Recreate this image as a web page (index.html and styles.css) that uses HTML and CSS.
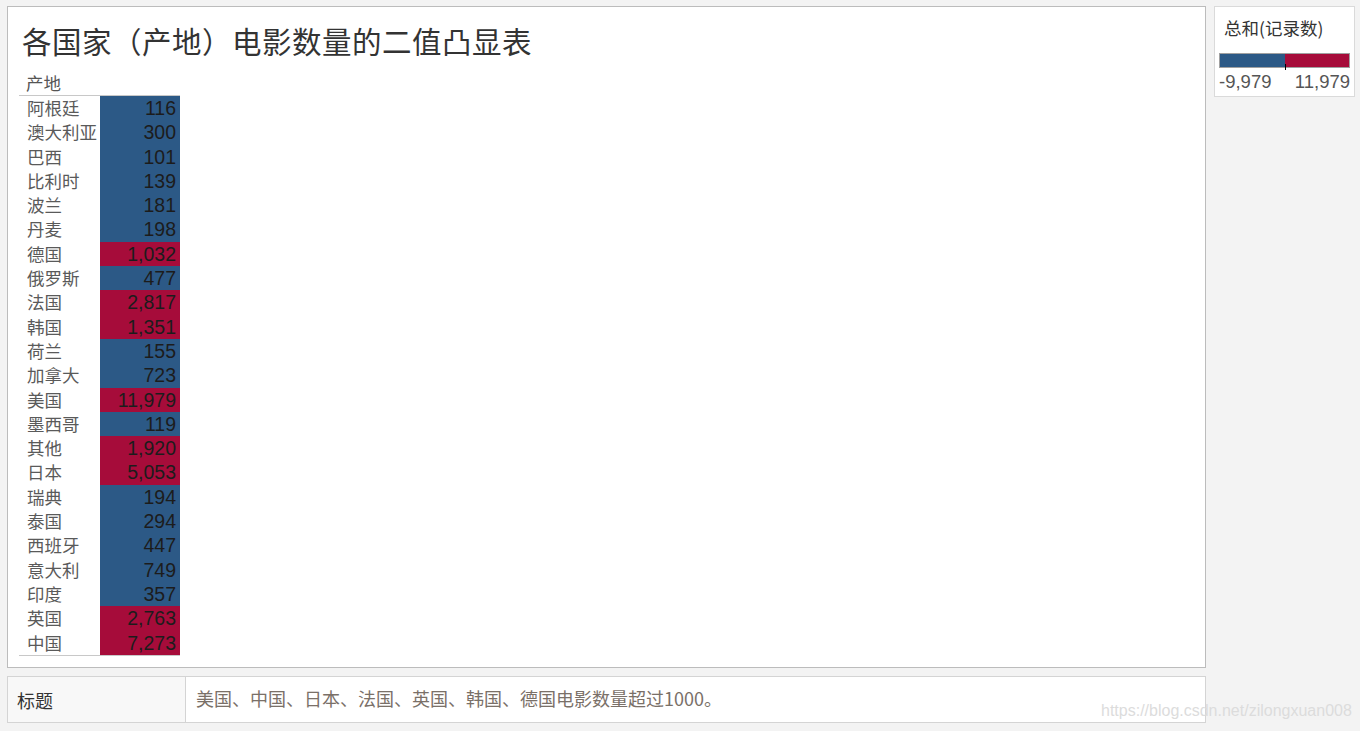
FILE: index.html
```html
<!DOCTYPE html>
<html lang="zh-CN">
<head>
<meta charset="utf-8">
<title>各国家（产地）电影数量的二值凸显表</title>
<link rel="stylesheet" href="styles.css">
</head>
<body>
<div class="page">
  <div class="left">
    <div class="main">
      <h1 class="title">各国家（产地）电影数量的二值凸显表</h1>
      <div class="table">
        <div class="head">产地</div>
        <div class="row"><span class="lab">阿根廷</span><span class="val blue">116</span></div>
        <div class="row"><span class="lab">澳大利亚</span><span class="val blue">300</span></div>
        <div class="row"><span class="lab">巴西</span><span class="val blue">101</span></div>
        <div class="row"><span class="lab">比利时</span><span class="val blue">139</span></div>
        <div class="row"><span class="lab">波兰</span><span class="val blue">181</span></div>
        <div class="row"><span class="lab">丹麦</span><span class="val blue">198</span></div>
        <div class="row"><span class="lab">德国</span><span class="val red">1,032</span></div>
        <div class="row"><span class="lab">俄罗斯</span><span class="val blue">477</span></div>
        <div class="row"><span class="lab">法国</span><span class="val red">2,817</span></div>
        <div class="row"><span class="lab">韩国</span><span class="val red">1,351</span></div>
        <div class="row"><span class="lab">荷兰</span><span class="val blue">155</span></div>
        <div class="row"><span class="lab">加拿大</span><span class="val blue">723</span></div>
        <div class="row"><span class="lab">美国</span><span class="val red">11,979</span></div>
        <div class="row"><span class="lab">墨西哥</span><span class="val blue">119</span></div>
        <div class="row"><span class="lab">其他</span><span class="val red">1,920</span></div>
        <div class="row"><span class="lab">日本</span><span class="val red">5,053</span></div>
        <div class="row"><span class="lab">瑞典</span><span class="val blue">194</span></div>
        <div class="row"><span class="lab">泰国</span><span class="val blue">294</span></div>
        <div class="row"><span class="lab">西班牙</span><span class="val blue">447</span></div>
        <div class="row"><span class="lab">意大利</span><span class="val blue">749</span></div>
        <div class="row"><span class="lab">印度</span><span class="val blue">357</span></div>
        <div class="row"><span class="lab">英国</span><span class="val red">2,763</span></div>
        <div class="row last"><span class="lab">中国</span><span class="val red">7,273</span></div>
      </div>
    </div>
    <div class="footer">
      <div class="fkey">标题</div>
      <div class="fval">美国、中国、日本、法国、英国、韩国、德国电影数量超过1000。</div>
    </div>
  </div>
  <div class="legend">
    <div class="ltitle">总和(记录数)</div>
    <div class="lbar"><span class="lblue"></span><span class="lred"></span><span class="ltick"></span></div>
    <div class="llabels"><span>-9,979</span><span>11,979</span></div>
  </div>
</div>
<div class="watermark">https://blog.csdn.net/zilongxuan008</div>
</body>
</html>
```
FILE: styles.css
```css
html, body {
  margin: 0;
  padding: 0;
  background: #f3f3f3;
  font-family: "Noto Sans CJK SC", "Noto Sans", sans-serif;
}
.page {
  display: flex;
  align-items: flex-start;
  gap: 8px;
  padding: 6px 0 0 7px;
}
.left {
  display: flex;
  flex-direction: column;
  gap: 8px;
  width: 1199px;
}
.main {
  box-sizing: border-box;
  height: 662px;
  background: #fff;
  border: 1px solid #bcbcbc;
  padding: 15px 0 0 11px;
}
.title {
  margin: 0 0 13px 3px;
  font-size: 29.5px;
  line-height: 36px;
  font-weight: 400;
  color: #333;
  letter-spacing: 0.5px;
}
.table {
  width: 161px;
  border-bottom: 1px solid #c8c8c8;
}
.head {
  height: 24px;
  line-height: 24px;
  border-bottom: 1px solid #c8c8c8;
  padding-left: 7px;
  font-size: 17.5px;
  color: #555;
}
.row {
  display: flex;
  height: 24.3px;
  line-height: 24.3px;
}
.lab {
  width: 81px;
  padding-left: 8px;
  box-sizing: border-box;
  font-size: 17.5px;
  color: #5a5a5a;
  white-space: nowrap;
}
.val {
  width: 80px;
  box-sizing: border-box;
  text-align: right;
  padding-right: 4px;
  font-family: "Liberation Sans", Arial, sans-serif;
  font-size: 19.5px;
  color: #1c1c1c;
}
.blue { background: #2c5986; }
.red { background: #a60c3a; }
.footer {
  display: flex;
  height: 47px;
  box-sizing: border-box;
  border: 1px solid #d4d4d4;
  background: #fff;
}
.fkey {
  width: 178px;
  box-sizing: border-box;
  background: #f8f8f8;
  border-right: 1px solid #d4d4d4;
  padding: 10px 0 0 9px;
  font-size: 18px;
  color: #333;
}
.fval {
  padding: 8px 0 0 10px;
  font-size: 18px;
  color: #7a7068;
}
.legend {
  width: 141px;
  height: 91px;
  box-sizing: border-box;
  background: #fff;
  border: 1px solid #dadada;
  padding: 9px 4px 0 4px;
}
.ltitle {
  padding-left: 5px;
  font-size: 17.5px;
  line-height: 24px;
  color: #333;
  white-space: nowrap;
}
.lbar {
  position: relative;
  display: flex;
  margin-top: 13px;
  height: 15px;
  box-sizing: border-box;
  border: 1px solid #a0a0a0;
}
.lblue { flex: 1; background: #2c5986; }
.lred { flex: 1; background: #a60c3a; }
.ltick {
  position: absolute;
  left: 65px;
  bottom: -3px;
  width: 1px;
  height: 6px;
  background: #000;
}
.llabels {
  display: flex;
  justify-content: space-between;
  margin-top: 3px;
  font-family: "Liberation Sans", Arial, sans-serif;
  font-size: 18.5px;
  line-height: 22px;
  color: #555;
}
.watermark {
  position: absolute;
  left: 1101px;
  top: 702px;
  font-family: "Liberation Sans", Arial, sans-serif;
  font-size: 16px;
  color: #dcdcdc;
  white-space: nowrap;
}
```
